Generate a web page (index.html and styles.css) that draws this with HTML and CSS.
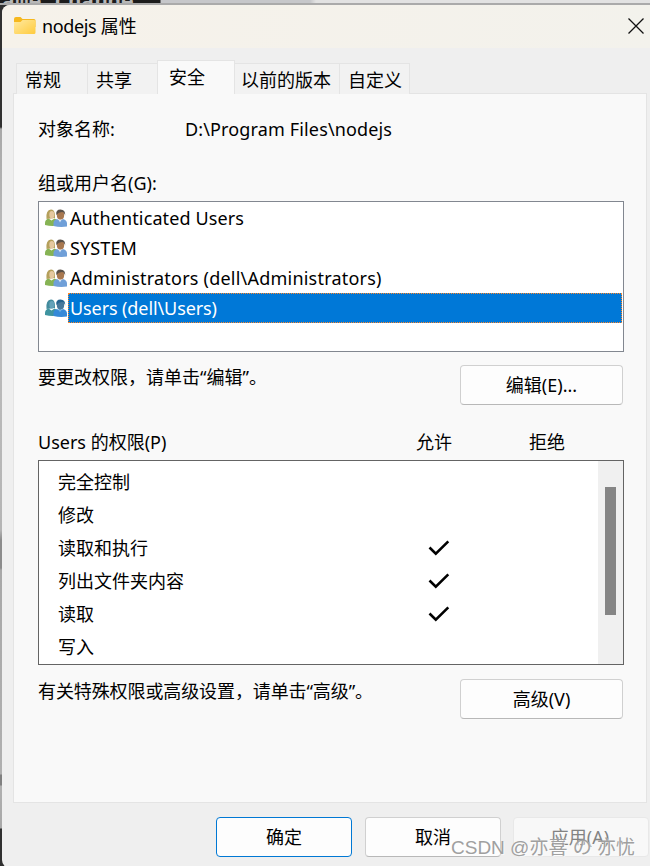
FILE: index.html
```html
<!DOCTYPE html>
<html lang="zh-CN">
  <head>
    <meta charset="UTF-8">
    <meta name="viewport" content="width=device-width, initial-scale=1.0">
    <title>nodejs 属性</title>
    <link rel="stylesheet" href="styles.css">
  </head>
  <body>
    <svg class="symbols" width="0" height="0">
      <symbol id="people" viewBox="0 0 22 18">
        <path class="coat-left" d="M0 16V14q0-3.500 3.500-4.500l3 2 3-2q3 1 3 4v3q-6 1-12.500-.5z"/>
        <path class="hair-left" d="M1.500 10Q0.500 1 6 0.500q4.500-.2 4 8.500z"/>
        <ellipse class="face-left" cx="6.800" cy="5.800" rx="2.500" ry="3.700"/>
        <path class="coat-right" d="M8.500 17V14q0-3 3.500-4l3 2 3-2q4 1 4 4.500v3q-7 1-13.500-.5z"/>
        <path class="shirt" d="M13 9.500l2 4 2-4z"/>
        <ellipse class="face-right" cx="15.500" cy="6" rx="3.700" ry="4.500"/>
        <path class="hair-right" d="M11.300 6Q10.500 0.500 15.500 0.500t4.700 6q-1-3.500-3.200-3.500-3.500 0-5.700 3z"/>
      </symbol>
      <symbol id="check" viewBox="0 0 22 16">
        <path d="M1.500 7.500L7.800 13.700L20.300 1.400" fill="none" stroke="#000" stroke-width="2.600"/>
      </symbol>
    </svg>

    <div class="desktop">
      <div class="editor-strip">ame change</div>
      <div class="window">
        <div class="titlebar">
          <svg class="folder" width="22" height="18" viewBox="0 0 22 18">
            <defs>
              <linearGradient id="fold" x1="0" y1="0" x2="1" y2="1">
                <stop offset="0" stop-color="#ffe9a0"/>
                <stop offset="1" stop-color="#ffcb3d"/>
              </linearGradient>
            </defs>
            <path d="M0 2q0-2 2-2h4.500l2 2H20q1.500 0 1.500 1.500V10H0z" fill="#f6b81e"/>
            <path d="M0 5h6.500l2-2H20q1.500 0 1.500 1.500V15.500q0 1.500-1.500 1.500H1.500Q0 17 0 15.500z" fill="url(#fold)"/>
          </svg>
          <span class="title"><span class="name">nodejs</span> 属性</span>
          <svg class="close" width="16" height="16" viewBox="0 0 16 16">
            <path d="M.5.5l15 15M15.500.5l-15 15" stroke="#111" stroke-width="1.300"/>
          </svg>
        </div>

        <div class="tabs">
          <div class="tab general">常规</div>
          <div class="tab share">共享</div>
          <div class="tab active">安全</div>
          <div class="tab versions">以前的版本</div>
          <div class="tab custom">自定义</div>
        </div>

        <div class="panel">
          <div class="object">
            <span class="object-label">对象名称:</span>
            <span class="path">D:\Program Files\nodejs</span>
          </div>

          <div class="groups-label">组或用户名(G):</div>
          <div class="groups">
            <div class="group"><svg class="people"><use href="#people"/></svg><span>Authenticated Users</span></div>
            <div class="group"><svg class="people"><use href="#people"/></svg><span>SYSTEM</span></div>
            <div class="group admins"><svg class="people"><use href="#people"/></svg><span>Administrators (dell\Administrators)</span></div>
            <div class="group selected"><svg class="people"><use href="#people"/></svg><span>Users (dell\Users)</span></div>
          </div>

          <div class="action edit">
            <span>要更改权限，请单击“编辑”。</span>
            <button>编辑(E)...</button>
          </div>

          <div class="perm-head">
            <span>Users 的权限(P)</span>
            <span>允许</span>
            <span>拒绝</span>
          </div>
          <div class="perms">
            <div class="perm-list">
              <div class="perm"><span>完全控制</span></div>
              <div class="perm"><span>修改</span></div>
              <div class="perm"><span>读取和执行</span><svg class="check"><use href="#check"/></svg></div>
              <div class="perm"><span>列出文件夹内容</span><svg class="check"><use href="#check"/></svg></div>
              <div class="perm"><span>读取</span><svg class="check"><use href="#check"/></svg></div>
              <div class="perm"><span>写入</span></div>
            </div>
            <div class="scrollbar"><div class="thumb"></div></div>
          </div>

          <div class="action advanced">
            <span>有关特殊权限或高级设置，请单击“高级”。</span>
            <button>高级(V)</button>
          </div>
        </div>

        <div class="footer">
          <button class="default">确定</button>
          <button>取消</button>
          <button class="apply" disabled>应用(A)</button>
        </div>
      </div>
      <div class="watermark">CSDN @亦喜 の 亦忧</div>
    </div>
  </body>
</html>
```

FILE: styles.css
```css
* {
  box-sizing: border-box;
}
body {
  margin: 0;
  overflow: hidden;
  font-family: "Noto Sans", "Noto Sans CJK SC", sans-serif;
  font-size: 18px;
  line-height: 26px;
  color: #000;
}
.symbols {
  position: absolute;
}
.desktop {
  position: relative;
  width: 650px;
  height: 866px;
  overflow: hidden;
  background: linear-gradient(#303030 127px, #a8a8a8 129px, #bdbdbd 250px, #b5b5b5 530px, #8c8c8c 540px, #8c8c8c 568px, #a8a8a8 570px, #b0b0b0 774px, #808080 775px, #808080 785px, #b0b0b0 786px, #a8a8a8 828px, #303030 829px);
}
.editor-strip {
  height: 5px;
  padding-left: 2px;
  overflow: hidden;
  background: linear-gradient(90deg, #1c1c1c 160px, #c6c7ca 161px, #c6c7ca 310px, #e2e2e2 316px);
  border-bottom: 2px solid #aaa;
  color: #b8b8b8;
  font: bold 22px/5px "Liberation Mono", monospace;
  white-space: pre;
}
.window {
  margin-left: 2px;
  width: 660px;
  height: 863px;
  border-radius: 8px;
  overflow: hidden;
  background: #efefef;
}
.titlebar {
  display: flex;
  align-items: center;
  height: 43px;
  padding: 0 18px 2px 12px;
  background: linear-gradient(90deg, #f6f2ea, #f3f2ec);
}
.title {
  flex: 1;
  margin-left: 6px;
}
.name {
  letter-spacing: -0.4px;
}
.tabs {
  display: flex;
  align-items: flex-end;
  height: 46px;
  margin-left: 14px;
}
.tab {
  height: 31px;
  padding: 3px 0 0 8px;
  border: 1px solid #e4e4e4;
  border-right: 0;
  border-bottom: 0;
  background: #f2f2f2;
}
.general {
  width: 71px;
}
.share {
  width: 70px;
}
.active {
  width: 78px;
  height: 34px;
  padding-left: 11px;
  border-right: 1px solid #e4e4e4;
  background: #f9f9f9;
  z-index: 1;
}
.versions {
  width: 104px;
  padding-left: 6px;
  border-left: 0;
}
.custom {
  width: 71px;
  border-right: 1px solid #e4e4e4;
}
.panel {
  width: 634px;
  height: 710px;
  margin: -1px 0 0 11px;
  padding: 0 22px 0 24px;
  border: 1px solid #e4e4e4;
  background: #f9f9f9;
}
.object {
  display: flex;
  padding-top: 22px;
}
.object-label {
  width: 147px;
}
.path {
  letter-spacing: 0.14px;
}
.groups-label {
  margin-top: 28px;
}
.groups {
  height: 151px;
  margin-top: 5px;
  padding: 1px 1px 0 6px;
  border: 1px solid #828790;
  background: #fff;
}
.group {
  display: flex;
  align-items: center;
  height: 30px;
  letter-spacing: 0.12px;
  --coat-left: #86b354;
  --hair-left: #b5a05c;
  --face-left: #e5c9a0;
  --coat-right: #6f9fd8;
  --shirt: #dce9f5;
  --face-right: #a87850;
  --hair-right: #5a5148;
}
.group span {
  flex: 1;
  height: 30px;
  margin-left: 1px;
  padding-left: 1px;
  border: 1px solid transparent;
  line-height: 28px;
}
.admins {
  letter-spacing: 0.22px;
}
.selected {
  letter-spacing: -0.1px;
  --coat-left: #3f94a0;
  --hair-left: #438b9d;
  --face-left: #65a2ba;
  --coat-right: #3589d8;
  --shirt: #69addf;
  --face-right: #48789b;
  --hair-right: #24628e;
}
.selected span {
  background: #0078d7;
  border: 1px dotted #ff8728;
  color: #fff;
}
.people {
  width: 22px;
  height: 18px;
}
.coat-left { fill: var(--coat-left); }
.hair-left { fill: var(--hair-left); }
.face-left { fill: var(--face-left); }
.coat-right { fill: var(--coat-right); }
.shirt { fill: var(--shirt); }
.face-right { fill: var(--face-right); }
.hair-right { fill: var(--hair-right); }
button {
  width: 163px;
  height: 40px;
  padding: 0;
  border: 1px solid #d0d0d0;
  border-bottom-color: #b8b8b8;
  border-radius: 4px;
  background: #fdfdfd;
  color: #000;
  font: inherit;
}
.action {
  display: flex;
  justify-content: space-between;
  padding-right: 1px;
}
.action span {
  margin-top: -1px;
}
.edit {
  margin-top: 13px;
}
.perm-head {
  display: grid;
  grid-template-columns: 378px 113px 1fr;
  margin-top: 24px;
}
.perms {
  display: flex;
  height: 205px;
  margin-top: 5px;
  border: 1px solid #646464;
  background: #fff;
}
.perm-list {
  flex: 1;
  padding: 4px 0 0 19px;
}
.perm {
  display: grid;
  grid-template-columns: 370px 1fr;
  align-items: center;
  height: 33px;
}
.check {
  width: 22px;
  height: 16px;
}
.scrollbar {
  width: 25px;
  padding: 26px 0 0 7px;
  background: #f0f0f0;
}
.thumb {
  width: 11px;
  height: 128px;
  background: #858585;
}
.advanced {
  margin-top: 14px;
}
.advanced span {
  letter-spacing: -0.1px;
}
.footer {
  display: flex;
  gap: 13px;
  padding: 14px 0 0 214px;
}
.footer button {
  width: 136px;
}
.footer .default {
  border-color: #0078d4;
}
.footer .apply {
  margin-left: -1px;
  padding-right: 2px;
  border-color: #e8e8e8;
  background: #f8f8f8;
  color: #838383;
}
.watermark {
  position: absolute;
  left: 451px;
  top: 835px;
  color: #a0a0a0;
  font-family: "Liberation Sans", "Noto Sans CJK SC", sans-serif;
  font-size: 19px;
  text-shadow: 1px 1px 0 rgba(255, 255, 255, 0.6);
  white-space: nowrap;
}
```
